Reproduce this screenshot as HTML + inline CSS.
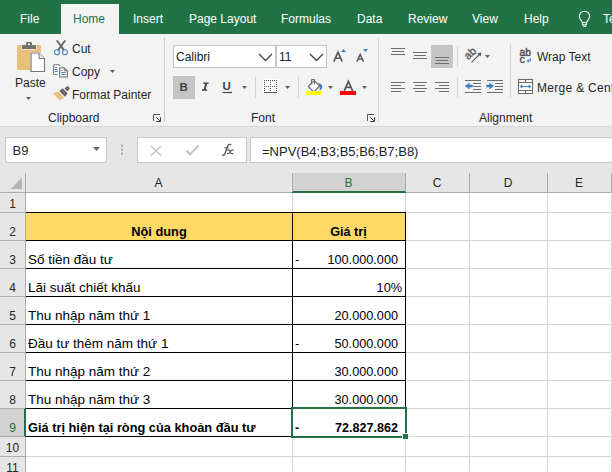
<!DOCTYPE html>
<html><head><meta charset="utf-8">
<style>
*{margin:0;padding:0;box-sizing:border-box}
html,body{width:612px;height:472px;overflow:hidden;background:#fff;font-family:"Liberation Sans",sans-serif}
.a{position:absolute}
.tab{position:absolute;top:13px;font-size:12px;color:#fff;line-height:12px;white-space:nowrap}
.t{position:absolute;font-size:12px;color:#262626;line-height:12px;white-space:nowrap}
.sep{position:absolute;width:1px;background:#d4d4d4}
.box{position:absolute;background:#fff;border:1px solid #c6c6c6}
.gl{position:absolute;background:#d4d4d4}
.cell{position:absolute;font-size:13.5px;color:#000;line-height:14px;white-space:nowrap}
svg{position:absolute;left:0;top:0}
</style></head><body>

<div class="a" style="left:0;top:0;width:612px;height:34px;background:#217346"></div>
<div class="a" style="left:61px;top:4px;width:58px;height:30px;background:#f3f3f3"></div>
<div class="tab" style="left:20px">File</div>
<div class="tab" style="left:73px;color:#217346">Home</div>
<div class="tab" style="left:133px">Insert</div>
<div class="tab" style="left:189px">Page Layout</div>
<div class="tab" style="left:281px">Formulas</div>
<div class="tab" style="left:357px">Data</div>
<div class="tab" style="left:408px">Review</div>
<div class="tab" style="left:472px">View</div>
<div class="tab" style="left:524px">Help</div>
<div class="tab" style="left:603px">Te</div>
<div class="a" style="left:0;top:34px;width:612px;height:92px;background:#f3f3f3"></div>
<div class="a" style="left:0;top:126px;width:612px;height:1px;background:#d5d5d5"></div>
<div class="t" style="left:15px;top:77px">Paste</div>
<div class="t" style="left:72px;top:43px">Cut</div>
<div class="t" style="left:72px;top:66px">Copy</div>
<div class="t" style="left:72px;top:89px">Format Painter</div>
<div class="t" style="left:48px;top:112px">Clipboard</div>
<div class="t" style="left:251px;top:112px">Font</div>
<div class="t" style="left:479px;top:112px">Alignment</div>
<div class="t" style="left:537px;top:51px">Wrap Text</div>
<div class="t" style="left:537px;top:82px;letter-spacing:0.3px">Merge &amp; Center</div>
<div class="sep" style="left:164px;top:38px;height:84px;background:#c8c8c8"></div>
<div class="sep" style="left:378px;top:38px;height:84px"></div>
<div class="sep" style="left:255px;top:77px;height:21px"></div>
<div class="sep" style="left:298px;top:77px;height:21px"></div>
<div class="sep" style="left:457px;top:46px;height:21px"></div>
<div class="sep" style="left:457px;top:77px;height:21px"></div>
<div class="sep" style="left:510px;top:44px;height:54px"></div>
<div class="box" style="left:173px;top:45px;width:103px;height:23px"></div>
<div class="t" style="left:176px;top:51px;color:#222">Calibri</div>
<div class="box" style="left:276px;top:45px;width:51px;height:23px"></div>
<div class="t" style="left:279px;top:51px;color:#222">11</div>
<div class="a" style="left:173px;top:76px;width:22px;height:23px;background:#c5c5c5"></div>
<div class="a" style="left:431px;top:45px;width:22px;height:23px;background:#c5c5c5"></div>
<div class="a" style="left:0;top:127px;width:612px;height:46px;background:#e6e6e6"></div>
<div class="box" style="left:5px;top:137px;width:102px;height:26px"></div>
<div class="t" style="left:12.5px;top:144px;font-size:13px;line-height:13px">B9</div>
<div class="box" style="left:137px;top:137px;width:110px;height:26px"></div>
<div class="box" style="left:250px;top:137px;width:370px;height:26px"></div>
<div class="t" style="left:262px;top:145px;font-size:13px;line-height:13px;color:#222">=NPV(B4;B3;B5;B6;B7;B8)</div>
<div class="a" style="left:0;top:173px;width:612px;height:19px;background:#e6e6e6"></div>
<div class="a" style="left:0;top:192px;width:612px;height:1px;background:#ababab"></div>
<div class="a" style="left:292px;top:173px;width:113px;height:19px;background:#d2d2d2"></div>
<div class="a" style="left:292px;top:191px;width:114px;height:2px;background:#217346"></div>
<div class="a" style="left:25px;top:173px;width:1px;height:19px;background:#ababab"></div>
<div class="a" style="left:292px;top:173px;width:1px;height:19px;background:#ababab"></div>
<div class="a" style="left:405px;top:173px;width:1px;height:19px;background:#ababab"></div>
<div class="a" style="left:469px;top:173px;width:1px;height:19px;background:#ababab"></div>
<div class="a" style="left:547px;top:173px;width:1px;height:19px;background:#ababab"></div>
<div class="a" style="left:611px;top:173px;width:1px;height:19px;background:#ababab"></div>
<div class="a" style="left:0;top:193px;width:25px;height:279px;background:#e6e6e6"></div>
<div class="a" style="left:0;top:409px;width:25px;height:27px;background:#d2d2d2"></div>
<div class="a" style="left:25px;top:173px;width:1px;height:299px;background:#ababab"></div>
<div class="a" style="left:24px;top:408px;width:2px;height:29px;background:#217346"></div>
<div class="a" style="left:0;top:212px;width:25px;height:1px;background:#ababab"></div>
<div class="gl" style="left:26px;top:212px;width:586px;height:1px"></div>
<div class="a" style="left:0;top:240px;width:25px;height:1px;background:#ababab"></div>
<div class="gl" style="left:26px;top:240px;width:586px;height:1px"></div>
<div class="a" style="left:0;top:268px;width:25px;height:1px;background:#ababab"></div>
<div class="gl" style="left:26px;top:268px;width:586px;height:1px"></div>
<div class="a" style="left:0;top:296px;width:25px;height:1px;background:#ababab"></div>
<div class="gl" style="left:26px;top:296px;width:586px;height:1px"></div>
<div class="a" style="left:0;top:324px;width:25px;height:1px;background:#ababab"></div>
<div class="gl" style="left:26px;top:324px;width:586px;height:1px"></div>
<div class="a" style="left:0;top:352px;width:25px;height:1px;background:#ababab"></div>
<div class="gl" style="left:26px;top:352px;width:586px;height:1px"></div>
<div class="a" style="left:0;top:380px;width:25px;height:1px;background:#ababab"></div>
<div class="gl" style="left:26px;top:380px;width:586px;height:1px"></div>
<div class="a" style="left:0;top:408px;width:25px;height:1px;background:#ababab"></div>
<div class="gl" style="left:26px;top:408px;width:586px;height:1px"></div>
<div class="a" style="left:0;top:436px;width:25px;height:1px;background:#ababab"></div>
<div class="gl" style="left:26px;top:436px;width:586px;height:1px"></div>
<div class="a" style="left:0;top:456px;width:25px;height:1px;background:#ababab"></div>
<div class="gl" style="left:26px;top:456px;width:586px;height:1px"></div>
<div class="gl" style="left:292px;top:193px;width:1px;height:279px"></div>
<div class="gl" style="left:405px;top:193px;width:1px;height:279px"></div>
<div class="gl" style="left:469px;top:193px;width:1px;height:279px"></div>
<div class="gl" style="left:547px;top:193px;width:1px;height:279px"></div>
<div class="gl" style="left:611px;top:193px;width:1px;height:279px"></div>
<div class="a" style="left:26px;top:213px;width:379px;height:27px;background:#ffd966"></div>
<div class="a" style="left:26px;top:212px;width:380px;height:1px;background:#000"></div>
<div class="a" style="left:26px;top:240px;width:380px;height:1px;background:#000"></div>
<div class="a" style="left:26px;top:268px;width:380px;height:1px;background:#000"></div>
<div class="a" style="left:26px;top:296px;width:380px;height:1px;background:#000"></div>
<div class="a" style="left:26px;top:324px;width:380px;height:1px;background:#000"></div>
<div class="a" style="left:26px;top:352px;width:380px;height:1px;background:#000"></div>
<div class="a" style="left:26px;top:380px;width:380px;height:1px;background:#000"></div>
<div class="a" style="left:26px;top:408px;width:380px;height:1px;background:#000"></div>
<div class="a" style="left:26px;top:436px;width:380px;height:1px;background:#000"></div>
<div class="a" style="left:292px;top:212px;width:1px;height:225px;background:#000"></div>
<div class="a" style="left:405px;top:212px;width:1px;height:225px;background:#000"></div>
<div class="a" style="left:291px;top:407px;width:116px;height:31px;border:2px solid #217346"></div>
<div class="a" style="left:402px;top:433px;width:7px;height:7px;background:#217346;border:1px solid #fff"></div>
<div class="t" style="left:25px;width:267px;top:177px;text-align:center;color:#262626">A</div>
<div class="t" style="left:292px;width:113px;top:177px;text-align:center;color:#217346">B</div>
<div class="t" style="left:405px;width:64px;top:177px;text-align:center;color:#262626">C</div>
<div class="t" style="left:469px;width:78px;top:177px;text-align:center;color:#262626">D</div>
<div class="t" style="left:547px;width:64px;top:177px;text-align:center;color:#262626">E</div>
<div class="t" style="left:0;width:25px;top:198px;text-align:center;color:#262626">1</div>
<div class="t" style="left:0;width:25px;top:226px;text-align:center;color:#262626">2</div>
<div class="t" style="left:0;width:25px;top:254px;text-align:center;color:#262626">3</div>
<div class="t" style="left:0;width:25px;top:282px;text-align:center;color:#262626">4</div>
<div class="t" style="left:0;width:25px;top:310px;text-align:center;color:#262626">5</div>
<div class="t" style="left:0;width:25px;top:338px;text-align:center;color:#262626">6</div>
<div class="t" style="left:0;width:25px;top:366px;text-align:center;color:#262626">7</div>
<div class="t" style="left:0;width:25px;top:394px;text-align:center;color:#262626">8</div>
<div class="t" style="left:0;width:25px;top:422px;text-align:center;color:#217346">9</div>
<div class="t" style="left:0;width:25px;top:442px;text-align:center;color:#262626">10</div>
<div class="t" style="left:0;width:25px;top:462px;text-align:center;color:#262626">11</div>
<div class="cell" style="left:26px;width:266px;top:225px;text-align:center;font-weight:bold;font-size:12.8px">Nội dung</div>
<div class="cell" style="left:28px;top:253px">Số tiền đầu tư</div>
<div class="cell" style="left:28px;top:281px">Lãi suất chiết khấu</div>
<div class="cell" style="left:28px;top:309px">Thu nhập năm thứ 1</div>
<div class="cell" style="left:28px;top:337px">Đầu tư thêm năm thứ 1</div>
<div class="cell" style="left:28px;top:365px">Thu nhập năm thứ 2</div>
<div class="cell" style="left:28px;top:393px">Thu nhập năm thứ 3</div>
<div class="cell" style="left:28px;top:421px;font-weight:bold;font-size:12.8px">Giá trị hiện tại ròng của khoản đầu tư</div>
<div class="cell" style="left:292px;width:113px;top:225px;text-align:center;font-weight:bold;font-size:12.6px;">Giá trị</div>
<div class="cell" style="right:214px;top:253px;font-size:12.7px;">100.000.000</div>
<div class="cell" style="left:295px;top:253px;font-size:12.7px;">-</div>
<div class="cell" style="right:210px;top:281px;font-size:12.7px;">10%</div>
<div class="cell" style="right:214px;top:309px;font-size:12.7px;">20.000.000</div>
<div class="cell" style="right:214px;top:337px;font-size:12.7px;">50.000.000</div>
<div class="cell" style="left:295px;top:337px;font-size:12.7px;">-</div>
<div class="cell" style="right:214px;top:365px;font-size:12.7px;">30.000.000</div>
<div class="cell" style="right:214px;top:393px;font-size:12.7px;">30.000.000</div>
<div class="cell" style="right:214px;top:421px;font-weight:bold;font-size:12.6px;">72.827.862</div>
<div class="cell" style="left:295px;top:421px;font-weight:bold;font-size:12.6px;">-</div>
<svg width="612" height="472" viewBox="0 0 612 472"><rect x="17" y="45" width="24" height="25" rx="1.5" fill="#e8c07a"/><rect x="21.5" y="44.5" width="15" height="5" rx="1" fill="#fff"/><rect x="22" y="45" width="14" height="4" fill="#737373"/><rect x="26" y="42" width="6" height="4" rx="1.2" fill="#737373"/><rect x="28" y="43.5" width="2" height="1.5" fill="#fff"/><path d="M30 52 H39.5 L45.5 58 V72.5 H30 Z" fill="#fff"/><path d="M31 53 H39 L44.5 58.5 V71.5 H31 Z" fill="#fff" stroke="#777" stroke-width="1.2"/><path d="M39 53 V58.5 H44.5" fill="#eee" stroke="#777" stroke-width="1"/><path d="M26.0 97 H31.0 L28.5 100 Z" fill="#5f5f5f"/><path d="M110.0 70 H115.0 L112.5 73 Z" fill="#5f5f5f"/><path d="M57.2 41 L63.5 49.6 M64.8 41 L58.5 49.6" stroke="#6a6a6a" stroke-width="2" stroke-linecap="round"/><circle cx="57" cy="52.2" r="2.5" fill="none" stroke="#3f7fc1" stroke-width="1.05"/><circle cx="64.9" cy="52.2" r="2.5" fill="none" stroke="#3f7fc1" stroke-width="1.05"/><path d="M53.7 64.7 H59 L60 65.7 M53.7 64.7 V74.3 H58" fill="#fff" stroke="#6a6a6a" stroke-width="1.1"/><rect x="54.5" y="65.3" width="4" height="8.5" fill="#fff"/><path d="M55 67.5 H57 M55 69.5 H58 M55 71.5 H58" stroke="#3f7fc1" stroke-width="0.9"/><path d="M59.7 67.7 H64 L67.3 71 V77 H59.7 Z" fill="#fff" stroke="#6a6a6a" stroke-width="1.1"/><path d="M64.2 67.9 V70.8 H67.1" fill="none" stroke="#6a6a6a" stroke-width="0.9"/><path d="M61.2 70.5 H62.6 M61.2 72.5 H65.8 M61.2 74.5 H65.8" stroke="#3f7fc1" stroke-width="0.9"/><path d="M53 93.5 L58 91.5 L64 97.5 L60 100.5 Z" fill="#e8c07a"/><path d="M60.5 91 L62.5 89.5 L66.5 93.5 L65 95.5 Z" fill="#6a6a6a" stroke="#6a6a6a" stroke-width="1.8" stroke-linejoin="round"/><path d="M65.5 88.5 L67.5 86.8 L69 88.5 L67.3 90.3 Z" fill="#6a6a6a" stroke="#6a6a6a" stroke-width="1.6" stroke-linejoin="round"/><path d="M153.5 121.0 V114.5 H160.0" fill="none" stroke="#555" stroke-width="1"/><path d="M156.3 117.3 L159.8 120.8" fill="none" stroke="#333" stroke-width="1"/><path d="M160.5 117.3 V121.5 H156.3" fill="none" stroke="#333" stroke-width="1"/><path d="M367.5 121.0 V114.5 H374.0" fill="none" stroke="#555" stroke-width="1"/><path d="M370.3 117.3 L373.8 120.8" fill="none" stroke="#333" stroke-width="1"/><path d="M374.5 117.3 V121.5 H370.3" fill="none" stroke="#333" stroke-width="1"/><path d="M259 54 L265.5 60.5 L272 54" fill="none" stroke="#444" stroke-width="1.3"/><path d="M310 54 L316.5 60.5 L323 54" fill="none" stroke="#444" stroke-width="1.3"/><path d="M333.8 61.6 L338 52.2 L342.2 61.6 M335.5 58.3 H340.5" fill="none" stroke="#555" stroke-width="1.6"/><path d="M341 52 L343.5 49 L346 52 Z" fill="#3f7fc1"/><path d="M356.9 61.6 L360.2 54.4 L363.5 61.6 M358.2 59 H362.2" fill="none" stroke="#555" stroke-width="1.4"/><path d="M363 49 H368 L365.5 52 Z" fill="#3f7fc1"/><text x="179.5" y="90.8" font-family="Liberation Sans" font-size="11.5" font-weight="bold" fill="#444">B</text><path d="M203.4 83.2 H208.6 M202 90 H207.2" fill="none" stroke="#484848" stroke-width="1.4"/><path d="M206.3 83 L204.5 90.2" fill="none" stroke="#484848" stroke-width="2"/><text x="222.5" y="89.5" font-family="Liberation Sans" font-size="11.5" font-weight="bold" fill="#444">U</text><path d="M222.5 92.5 H232" stroke="#444" stroke-width="1.2"/><path d="M242.0 86 H247.0 L244.5 89 Z" fill="#5f5f5f"/><rect x="263" y="79" width="15" height="14" fill="#fff"/><rect x="264" y="80" width="1" height="1" fill="#555"/><rect x="266" y="80" width="1" height="1" fill="#555"/><rect x="268" y="80" width="1" height="1" fill="#555"/><rect x="270" y="80" width="1" height="1" fill="#555"/><rect x="272" y="80" width="1" height="1" fill="#555"/><rect x="274" y="80" width="1" height="1" fill="#555"/><rect x="276" y="80" width="1" height="1" fill="#555"/><rect x="264" y="82" width="1" height="1" fill="#555"/><rect x="270" y="82" width="1" height="1" fill="#555"/><rect x="276" y="82" width="1" height="1" fill="#555"/><rect x="264" y="84" width="1" height="1" fill="#555"/><rect x="270" y="84" width="1" height="1" fill="#555"/><rect x="276" y="84" width="1" height="1" fill="#555"/><rect x="264" y="86" width="1" height="1" fill="#555"/><rect x="266" y="86" width="1" height="1" fill="#555"/><rect x="268" y="86" width="1" height="1" fill="#555"/><rect x="270" y="86" width="1" height="1" fill="#555"/><rect x="272" y="86" width="1" height="1" fill="#555"/><rect x="274" y="86" width="1" height="1" fill="#555"/><rect x="276" y="86" width="1" height="1" fill="#555"/><rect x="264" y="88" width="1" height="1" fill="#555"/><rect x="270" y="88" width="1" height="1" fill="#555"/><rect x="276" y="88" width="1" height="1" fill="#555"/><rect x="264" y="90" width="1" height="1" fill="#555"/><rect x="270" y="90" width="1" height="1" fill="#555"/><rect x="276" y="90" width="1" height="1" fill="#555"/><rect x="264" y="92" width="13" height="1" fill="#555"/><path d="M285.0 86 H290.0 L287.5 89 Z" fill="#5f5f5f"/><path d="M308.3 86.3 L314.2 80.6 L319.8 86 L313.6 91.8 Z" fill="#fff" stroke="#666" stroke-width="1.1" stroke-linejoin="round"/><path d="M311.5 84.5 V80.2 Q311.5 79.5 312.2 79.5 H313.8 Q314.5 79.5 314.5 80.2 V84.5" fill="none" stroke="#666" stroke-width="1.1"/><path d="M318.3 83 Q322.8 84 322.2 87.5 Q321.6 89.8 319.6 90.6 Q320.6 87.2 318.3 83 Z" fill="#3f7fc1"/><rect x="306" y="91" width="16" height="4" fill="#ffff00"/><path d="M328.0 86 H333.0 L330.5 89 Z" fill="#5f5f5f"/><path d="M344.2 90.8 L348.4 81.3 L352.6 90.8 M346 87.4 H350.8" fill="none" stroke="#555" stroke-width="1.7"/><rect x="340" y="91" width="16" height="4" fill="#ff0000"/><path d="M362.0 86 H367.0 L364.5 89 Z" fill="#5f5f5f"/><rect x="391" y="48" width="14" height="1" fill="#6d6d6d"/><rect x="391" y="54" width="14" height="1" fill="#6d6d6d"/><rect x="392" y="51" width="12" height="1" fill="#6d6d6d"/><rect x="413" y="52" width="14" height="1" fill="#6d6d6d"/><rect x="413" y="58" width="14" height="1" fill="#6d6d6d"/><rect x="414" y="55" width="12" height="1" fill="#6d6d6d"/><rect x="435" y="57" width="14" height="1" fill="#6d6d6d"/><rect x="435" y="63" width="14" height="1" fill="#6d6d6d"/><rect x="436" y="60" width="12" height="1" fill="#6d6d6d"/><rect x="391" y="82" width="14" height="1" fill="#6d6d6d"/><rect x="413" y="82" width="14" height="1" fill="#6d6d6d"/><rect x="435" y="82" width="14" height="1" fill="#6d6d6d"/><rect x="391" y="85" width="10" height="1" fill="#6d6d6d"/><rect x="415" y="85" width="10" height="1" fill="#6d6d6d"/><rect x="439" y="85" width="10" height="1" fill="#6d6d6d"/><rect x="391" y="88" width="14" height="1" fill="#6d6d6d"/><rect x="413" y="88" width="14" height="1" fill="#6d6d6d"/><rect x="435" y="88" width="14" height="1" fill="#6d6d6d"/><rect x="391" y="91" width="10" height="1" fill="#6d6d6d"/><rect x="415" y="91" width="10" height="1" fill="#6d6d6d"/><rect x="439" y="91" width="10" height="1" fill="#6d6d6d"/><rect x="465" y="80" width="16" height="1" fill="#6d6d6d"/><rect x="465" y="92" width="16" height="1" fill="#6d6d6d"/><rect x="473" y="83" width="8" height="1" fill="#6d6d6d"/><rect x="473" y="86" width="8" height="1" fill="#6d6d6d"/><rect x="473" y="89" width="8" height="1" fill="#6d6d6d"/><rect x="487" y="80" width="16" height="1" fill="#6d6d6d"/><rect x="487" y="92" width="16" height="1" fill="#6d6d6d"/><rect x="495" y="83" width="8" height="1" fill="#6d6d6d"/><rect x="495" y="86" width="8" height="1" fill="#6d6d6d"/><rect x="495" y="89" width="8" height="1" fill="#6d6d6d"/><path d="M465 86 L469.5 83 V85.1 H472.5 V87.1 H469.5 V89 Z" fill="#3f7fc1" stroke="#3f7fc1" stroke-width="0.4" stroke-linejoin="round"/><path d="M494 86 L489.5 83 V85.1 H486.5 V87.1 H489.5 V89 Z" fill="#3f7fc1" stroke="#3f7fc1" stroke-width="0.4" stroke-linejoin="round"/><text x="0" y="0" font-family="Liberation Sans" font-size="11" fill="#505050" stroke="#505050" stroke-width="0.3" transform="translate(468.3 60.3) rotate(-45)">ab</text><path d="M471.5 62.3 L479.5 54.3" stroke="#555" stroke-width="1.1"/><path d="M481.3 52.6 L477.3 53.3 L480.6 56.6 Z" fill="#555"/><path d="M485.0 55 H490.0 L487.5 58 Z" fill="#5f5f5f"/><text x="519.6" y="55.6" font-family="Liberation Sans" font-size="10.3" fill="#444" stroke="#444" stroke-width="0.35">ab</text><text x="519.6" y="62.7" font-family="Liberation Sans" font-size="10.8" fill="#444" stroke="#444" stroke-width="0.3">c</text><path d="M530.3 58 V60.5 Q530.3 61 529.8 61 H527.5" fill="none" stroke="#3f7fc1" stroke-width="1.1"/><path d="M528.7 59 L526.8 61 L528.7 62.8 Z" fill="#3f7fc1"/><rect x="518.5" y="79.5" width="14" height="14" fill="#fff" stroke="#6a6a6a" stroke-width="1.1"/><path d="M518.5 82.5 H532.5 M518.5 90.5 H532.5 M525.5 79.5 V82.5 M525.5 90.5 V93.5" stroke="#6a6a6a" stroke-width="1.1"/><path d="M521 86.5 H530" stroke="#3f7fc1" stroke-width="1"/><path d="M520 86.5 L522 84.8 V88.2 Z M531 86.5 L529 84.8 V88.2 Z" fill="#3f7fc1" stroke="#3f7fc1" stroke-width="0.6" stroke-linejoin="round"/><path d="M582.5 22.6 L580.8 19.8 A5.1 5.1 0 1 1 588.2 19.8 L586.5 22.6" fill="none" stroke="#fff" stroke-width="1.1"/><rect x="582.5" y="22.6" width="4" height="2.2" fill="none" stroke="#fff" stroke-width="1"/><path d="M582.8 26.2 H586.2" stroke="#fff" stroke-width="1.2"/><path d="M22 177.5 V189 H10.5 Z" fill="#b6b6b6"/><path d="M151 146 L161 155.5 M161 146 L151 155.5" stroke="#c4c4c4" stroke-width="1.4"/><path d="M186.3 150.3 L190 154.2 L198.5 145.6" fill="none" stroke="#c4c4c4" stroke-width="2.1"/><path d="M222.4 155 Q224.2 156 225.2 153 L227.6 146.3 Q228.6 143.7 230.8 144.6" fill="none" stroke="#5a5a5a" stroke-width="1.35" stroke-linecap="round"/><path d="M224.5 147.8 H228.6" fill="none" stroke="#5a5a5a" stroke-width="1.2"/><path d="M227.6 150 Q229 149.5 229.7 151 L230.8 153 Q231.4 154 233 153.6 M233.4 150 Q232 149.6 230.8 151 L229.5 152.8 Q228.8 153.9 227.4 153.7" fill="none" stroke="#5a5a5a" stroke-width="1.2" stroke-linecap="round"/><path d="M93.0 147 H100.0 L96.5 151 Z" fill="#6a6a6a"/><rect x="121" y="144.7" width="2" height="2" fill="#a6a6a6"/><rect x="121" y="148.7" width="2" height="2" fill="#a6a6a6"/><rect x="121" y="152.7" width="2" height="2" fill="#a6a6a6"/></svg>
</body></html>
